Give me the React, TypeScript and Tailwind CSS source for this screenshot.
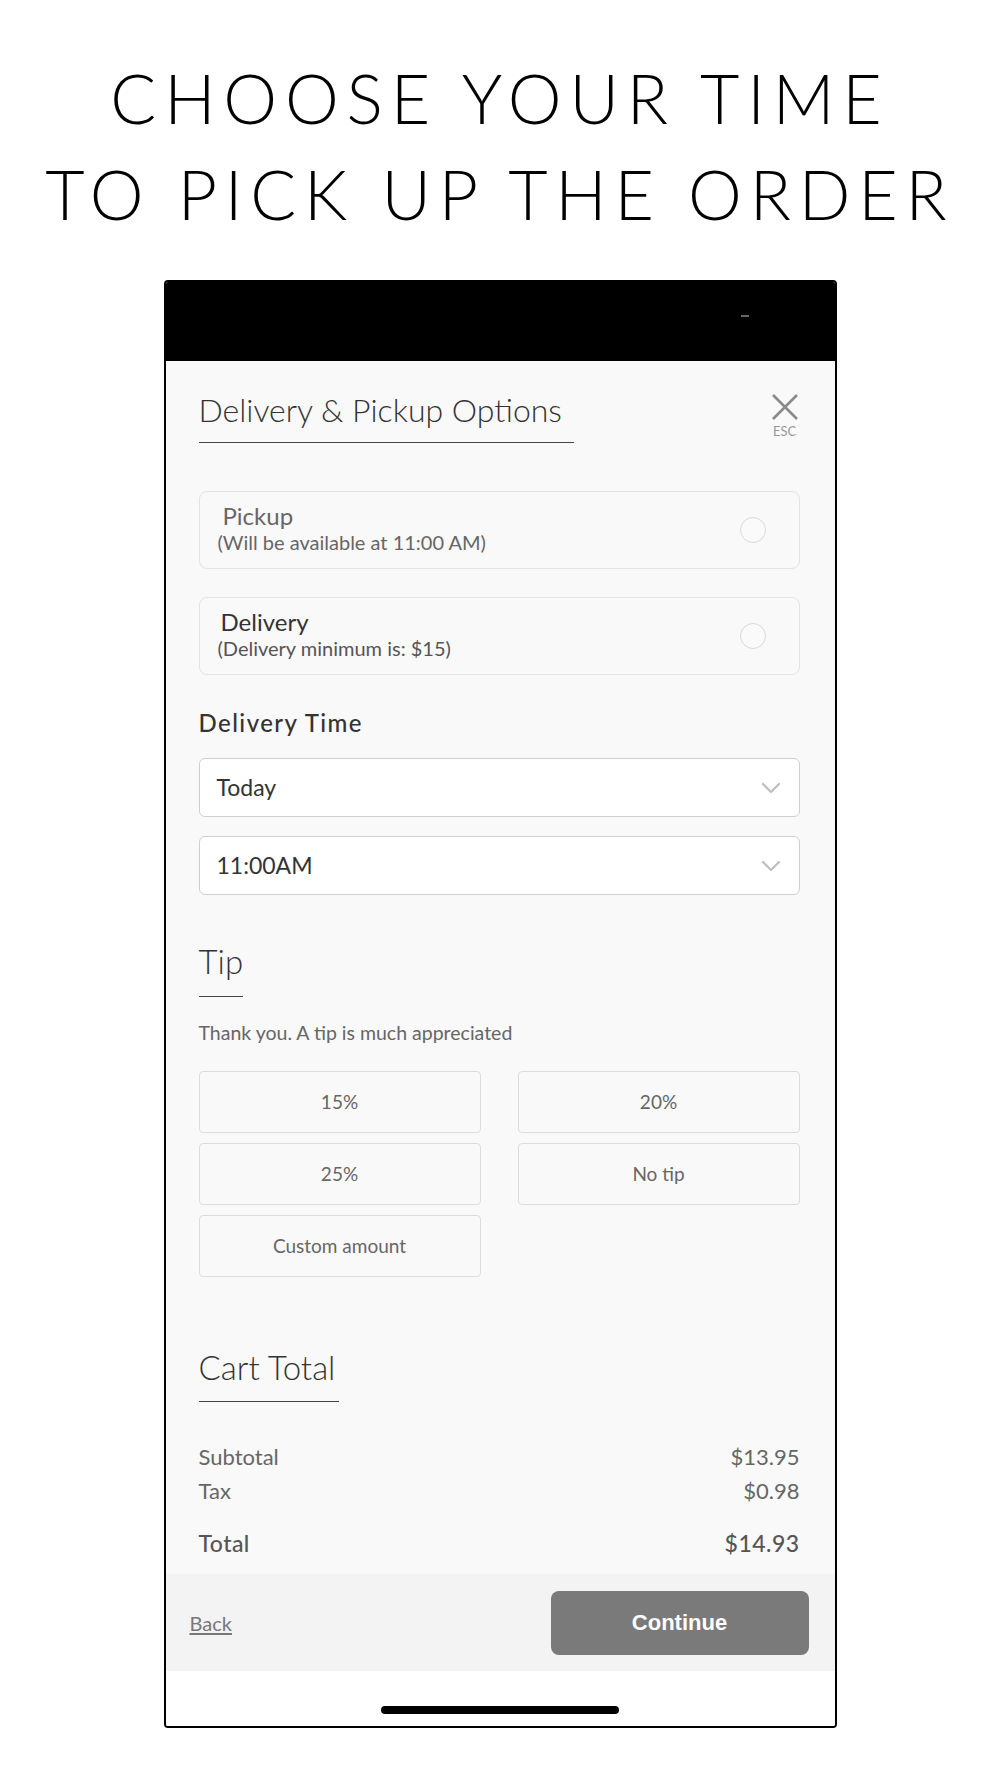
import React from "react";

const tips = ["15%", "20%", "25%", "No tip", "Custom amount"];

const Radio = () => (
  <span className="w-[26px] h-[26px] rounded-full border border-[#d9d9d9] bg-[#fafafa] shrink-0" />
);

const Chevron = () => (
  <svg width="20" height="12" viewBox="0 0 20 12" fill="none" className="shrink-0">
    <path d="M2 2l8 8 8-8" stroke="#bdbdbd" strokeWidth="2.2" strokeLinecap="round" strokeLinejoin="round" />
  </svg>
);

const App = () => {
  return (
    <div className="w-[1000px] h-[1778px] bg-white flex flex-col items-center font-['Lato',sans-serif]">
      <h1 className="pt-[50px] text-center text-[68px] leading-[96px] font-light tracking-[0.115em] text-black">
        <span className="block">CHOOSE YOUR TIME</span>
        <span className="block">TO PICK UP THE ORDER</span>
      </h1>

      <div className="mt-[38px] w-[673px] h-[1448px] border-2 border-black rounded-[4px] overflow-hidden flex flex-col bg-white">
        {/* status bar */}
        <div className="h-[79px] bg-black shrink-0 flex items-center justify-end pr-[86px]">
          <span className="w-[8px] h-[2px] bg-[#666] mt-[-12px]" />
        </div>

        <div className="flex-1 flex flex-col bg-[#f9f9f9]">
          <div className="flex-1 flex flex-col pl-[33px] pr-[35px]">
            {/* header */}
            <div className="flex justify-between items-start pt-[29px]">
              <h2 className="text-[32px] leading-[40px] text-[#333] font-light pb-[12px] border-b-[1.5px] border-[#444] pr-[12px]">
                Delivery &amp; Pickup Options
              </h2>
              <div className="flex flex-col items-center mt-[4px] mr-[1px]">
                <svg width="28" height="26" viewBox="0 0 28 26" fill="none">
                  <path d="M2 1l24 24M26 1L2 25" stroke="#8a8a8a" strokeWidth="2.6" />
                </svg>
                <span className="text-[13px] leading-[14px] mt-[4px] text-[#999]">ESC</span>
              </div>
            </div>

            {/* options */}
            <div className="mt-[48px] flex flex-col gap-[28px]">
              <div className="h-[78px] rounded-[8px] border border-[#e3e3e3] flex items-center justify-between pl-[18px] pr-[33px]">
                <div className="flex flex-col text-[#666]">
                  <span className="text-[24px] leading-[28px] ml-[5px] mt-[-3px]">Pickup</span>
                  <span className="text-[20px] leading-[25px]">(Will be available at 11:00 AM)</span>
                </div>
                <Radio />
              </div>
              <div className="h-[78px] rounded-[8px] border border-[#e3e3e3] flex items-center justify-between pl-[18px] pr-[33px]">
                <div className="flex flex-col">
                  <span className="text-[24px] leading-[28px] ml-[3px] mt-[-3px] text-[#333]">Delivery</span>
                  <span className="text-[20px] leading-[25px] text-[#555]">(Delivery minimum is: $15)</span>
                </div>
                <Radio />
              </div>
            </div>

            {/* delivery time */}
            <h3 className="mt-[33px] text-[24px] leading-[30px] font-medium text-[#333] tracking-[0.06em]">Delivery Time</h3>
            <div className="mt-[20px] flex flex-col gap-[19px]">
              {["Today", "11:00AM"].map((v) => (
                <div
                  key={v}
                  className="h-[59px] bg-white rounded-[6px] border-[1.5px] border-[#cfcfcf] flex items-center justify-between pl-[17px] pr-[18px]"
                >
                  <span className="text-[23px] text-[#333]">{v}</span>
                  <Chevron />
                </div>
              ))}
            </div>

            {/* tip */}
            <div className="mt-[46px] self-start">
              <h2 className="text-[33px] leading-[40px] text-[#333] font-light pb-[15px] border-b-[1.5px] border-[#444]">Tip</h2>
            </div>
            <p className="mt-[24px] text-[19.5px] leading-[24px] text-[#666]">Thank you. A tip is much appreciated</p>
            <div className="mt-[26px] grid grid-cols-2 gap-x-[37px] gap-y-[10px]">
              {tips.map((t) => (
                <div
                  key={t}
                  className="h-[62px] rounded-[4px] border border-[#dcdcdc] flex items-center justify-center text-[19px] text-[#666]"
                >
                  {t}
                </div>
              ))}
            </div>

            {/* cart total */}
            <div className="mt-[70px] self-start">
              <h2 className="text-[33px] leading-[40px] text-[#333] font-light pb-[14px] pr-[4px] border-b-[1.5px] border-[#444]">
                Cart Total
              </h2>
            </div>
            <div className="mt-[38px] flex flex-col text-[22px] leading-[34px] text-[#666]">
              <div className="flex justify-between">
                <span>Subtotal</span>
                <span>$13.95</span>
              </div>
              <div className="flex justify-between">
                <span>Tax</span>
                <span>$0.98</span>
              </div>
              <div className="flex justify-between mt-[18px] text-[23px] font-medium text-[#555] tracking-[0.02em]">
                <span>Total</span>
                <span>$14.93</span>
              </div>
            </div>
          </div>

          {/* footer */}
          <div className="h-[97px] bg-[#f3f3f3] flex items-center justify-between pl-[24px] pr-[26px] shrink-0">
            <a href="#" className="text-[20px] text-[#777] underline underline-offset-2">
              Back
            </a>
            <button className="w-[258px] h-[64px] rounded-[8px] bg-[#7a7a7a] text-white text-[22px] font-bold font-['Liberation_Sans',sans-serif]">
              Continue
            </button>
          </div>
        </div>

        {/* home indicator */}
        <div className="h-[55px] bg-white shrink-0 flex justify-center pt-[35px]">
          <span className="w-[238px] h-[8px] rounded-full bg-black" />
        </div>
      </div>
    </div>
  );
};

export default App;
